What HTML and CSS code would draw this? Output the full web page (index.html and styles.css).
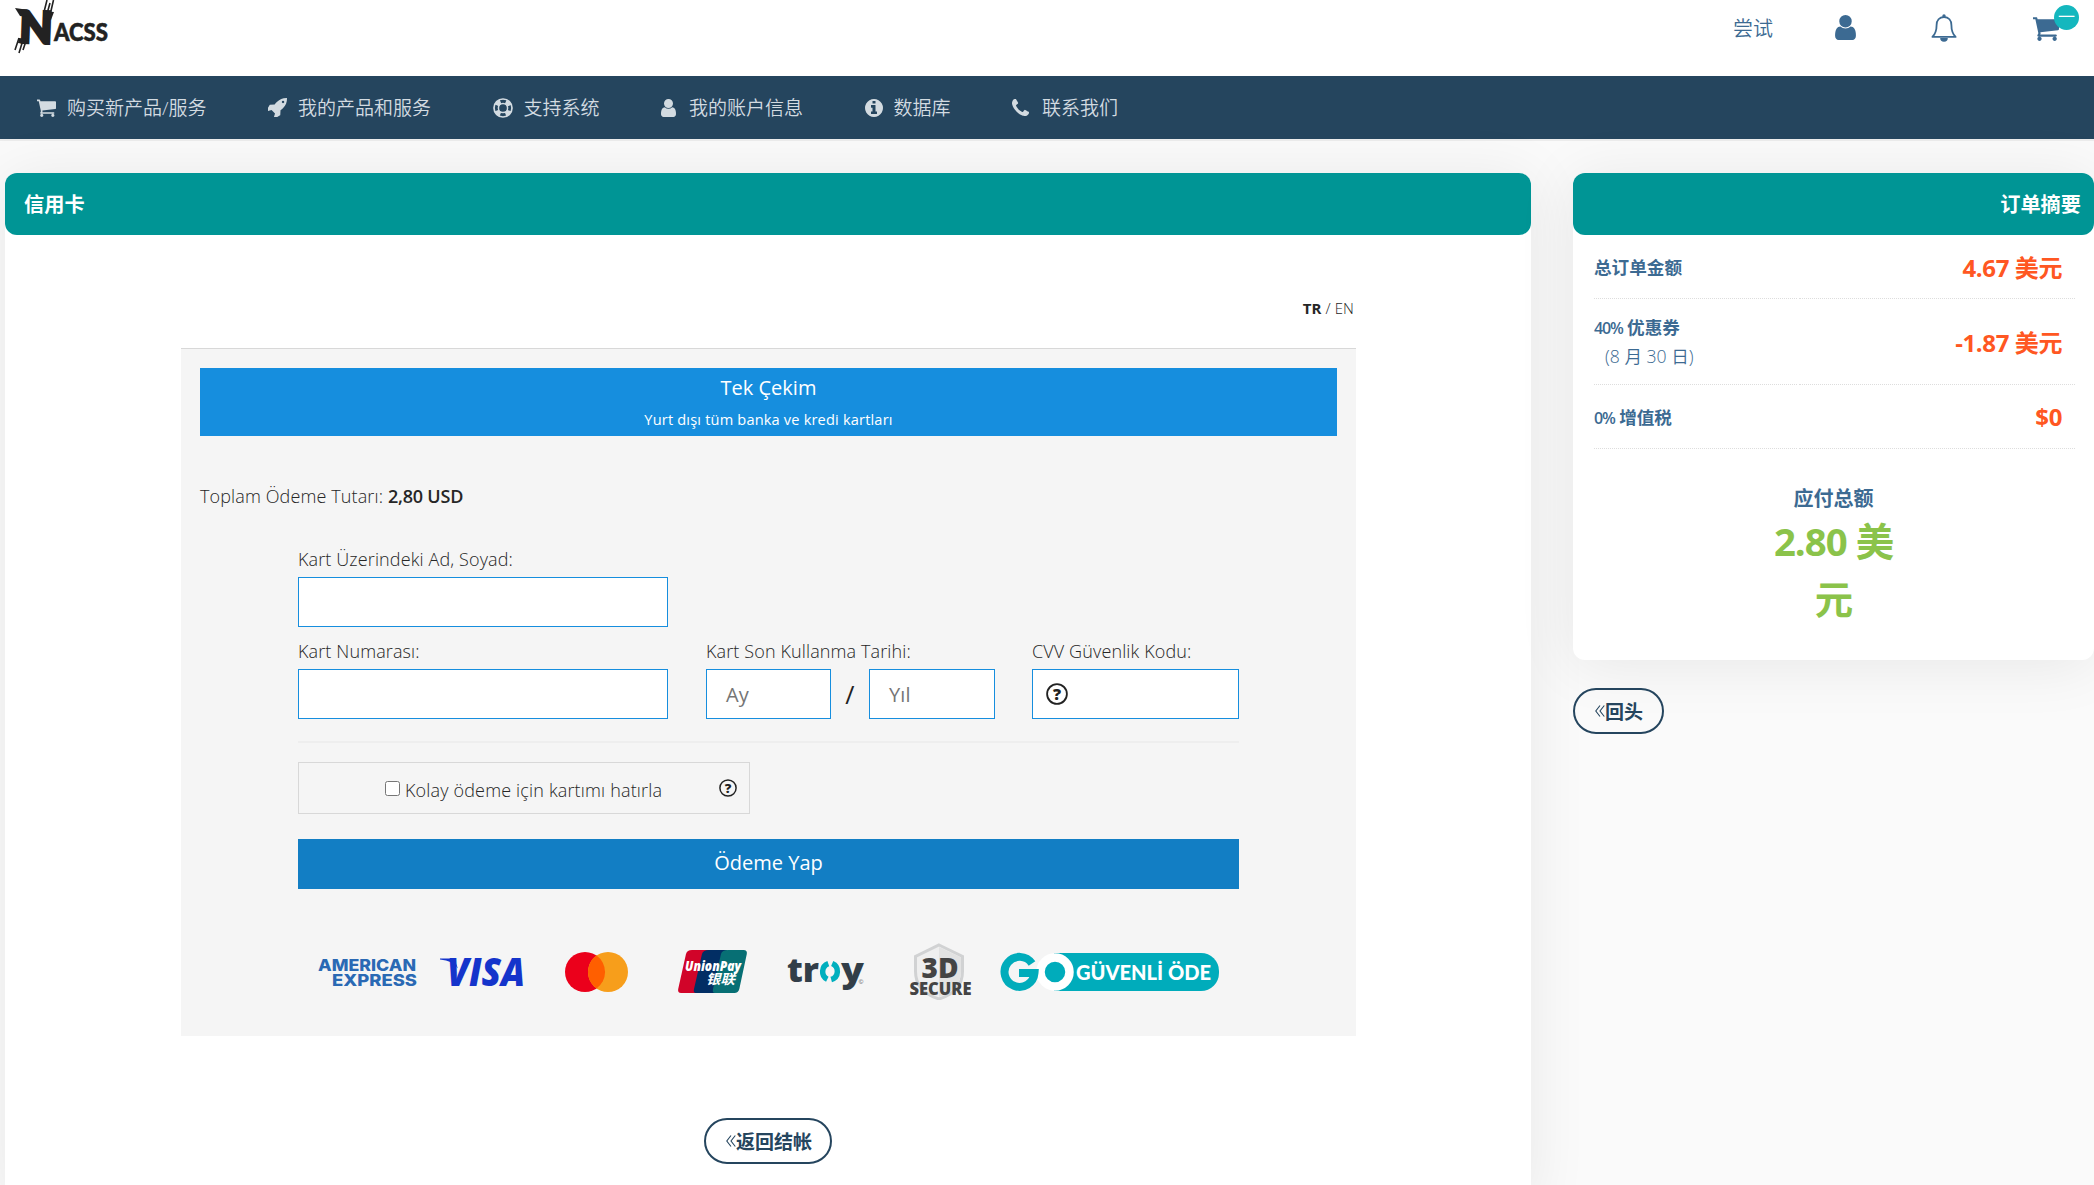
FILE: index.html
```html
<!DOCTYPE html>
<html lang="zh-CN">
<head>
<meta charset="utf-8">
<title>NACSS</title>
<link rel="stylesheet" href="styles.css">
</head>
<body>
<svg class="sprite" width="0" height="0">
  <symbol id="cart" viewBox="128 128 1536 1536"><path d="M640 1536q0 52-38 90t-90 38-90-38-38-90 38-90 90-38 90 38 38 90zm896 0q0 52-38 90t-90 38-90-38-38-90 38-90 90-38 90 38 38 90zm128-1088v512q0 24-16.500 42.500t-40.500 21.500l-1044 122q13 60 13 70 0 16-24 64h920q26 0 45 19t19 45-19 45-45 19h-1024q-26 0-45-19t-19-45q0-11 8-31.500t16-36 21.500-40 15.500-29.500l-177-823h-204q-26 0-45-19t-19-45 19-45 45-19h256q16 0 28.500 6.500t19.500 15.500 13 24.500 8 26 5.500 29.500 4.500 26h1201q26 0 45 19t19 45z"/></symbol>
  <symbol id="user" viewBox="256 128 1280 1536"><path d="M1536 1399q0 109-62.500 187t-150.500 78h-854q-88 0-150.500-78t-62.500-187q0-85 8.500-160.500t31.500-152 58.500-131 94-89 134.500-34.500q131 128 313 128t313-128q76 0 134.500 34.500t94 89 58.500 131 31.500 152 8.500 160.500zm-256-887q0 159-112.500 271.500t-271.500 112.500-271.500-112.500-112.500-271.500 112.500-271.500 271.500-112.500 271.500 112.500 112.500 271.500z"/></symbol>
  <symbol id="rocket" viewBox="128 128 1536 1536"><path d="M1440 448q0-40-28-68t-68-28-68 28-28 68 28 68 68 28 68-28 28-68zm224-288q0 249-75.500 430.500t-253.500 360.500q-81 80-195 176l-20 379q-2 16-16 26l-384 224q-7 4-16 4-12 0-23-9l-64-64q-13-14-8-32l85-276-281-281-276 85q-3 1-9 1-14 0-23-9l-64-64q-17-19-5-39l224-384q10-14 26-16l379-20q96-114 176-195 188-187 358-258t431-71q14 0 24 9.500t10 22.500z"/></symbol>
  <symbol id="info" viewBox="128 128 1536 1536"><path d="M1152 1376v-160q0-14-9-23t-23-9h-96v-512q0-14-9-23t-23-9h-320q-14 0-23 9t-9 23v160q0 14 9 23t23 9h96v320h-96q-14 0-23 9t-9 23v160q0 14 9 23t23 9h448q14 0 23-9t9-23zm-128-896v-160q0-14-9-23t-23-9h-192q-14 0-23 9t-9 23v160q0 14 9 23t23 9h192q14 0 23-9t9-23zm640 416q0 209-103 385.500t-279.500 279.500-385.500 103-385.500-103-279.500-279.500-103-385.500 103-385.500 279.500-279.500 385.500-103 385.500 103 279.500 279.500 103 385.500z"/></symbol>
  <symbol id="phone" viewBox="192 128 1408 1408"><path d="M1600 1240q0 27-10 70.500t-21 68.500q-21 50-122 106-94 51-186 51-27 0-53-3.500t-57.500-12.500-47-14.500-55.500-20.500-49-18q-98-35-175-83-127-79-264-216t-216-264q-48-77-83-175-3-9-18-49t-20.500-55.500-14.500-47-12.500-57.500-3.500-53q0-92 51-186 56-101 106-122 25-11 68.500-21t70.500-10q14 0 21 3 18 6 53 76 11 19 30 54t35 63.500 31 53.500q3 4 17.500 25t21.500 35.500 7 28.500q0 20-28.500 50t-62 55-62 53-28.500 46q0 9 5 22.500t8.500 20.500 14 24 11.500 19q76 137 174 235t235 174q2 1 19 11.500t24 14 20.500 8.500 22.500 5q18 0 46-28.500t53-62 55-62 50-28.500q14 0 28.500 7t35.500 21.500 25 17.500q25 15 53.500 31t63.500 35 54 30q70 35 76 53 3 7 3 21z"/></symbol>
  <symbol id="ring" viewBox="0 0 20 20"><g fill="none" stroke="currentColor"><circle cx="10" cy="10" r="9" stroke-width="1.700"/><circle cx="10" cy="10" r="4.600" stroke-width="1.500"/><circle cx="10" cy="10" r="6.900" stroke-width="4.600" stroke-dasharray="5.400 5.438" stroke-dashoffset="-2.700"/></g></symbol>
  <symbol id="bell" viewBox="0 0 26 28"><path d="M13 3C8.300 3 5.600 6.400 5.600 11c0 6-1.600 9.400-4.200 11.900h23.200C22 20.400 20.400 17 20.400 11 20.400 6.400 17.700 3 13 3z" fill="none" stroke="currentColor" stroke-width="1.800" stroke-linejoin="round"/><circle cx="13" cy="1.900" r="1.700"/><path d="M9.200 24h7.600a3.800 3.800 0 0 1-7.600 0z"/></symbol>
  <symbol id="help" viewBox="0 0 22 22"><circle cx="11" cy="11" r="9.900" fill="none" stroke="#222" stroke-width="1.800"/><text x="11" y="16.800" font-size="16" font-weight="800" text-anchor="middle" fill="#222" font-family="Open Sans, sans-serif">?</text></symbol>
</svg>

<header class="top">
  <svg class="logo" width="120" height="60" viewBox="0 0 120 60">
    <g transform="translate(19 42.500) rotate(2)"><text x="0" y="0" font-size="44" textLength="33" lengthAdjust="spacingAndGlyphs" class="logo-n">N</text></g>
    <path d="M15 8l14 2-3 7-6-1zM43 11l11 1-3 8-8-2zM19 38l9 1-4 5-6-1z" fill="#222"/>
    <g stroke="#222" stroke-width="1.600"><path d="M44 12l3-12M47.500 12l2.500-9M50.500 13l3-13M15 50l4-12M19 53l4-13M23 50l4-12"/></g>
    <text x="54" y="41" font-size="25" textLength="54" lengthAdjust="spacingAndGlyphs" class="logo-text">ACSS</text>
  </svg>
  <div class="account">
    <span class="account-name">尝试</span>
    <svg class="i-user"><use href="#user"/></svg>
    <svg class="i-bell"><use href="#bell"/></svg>
    <span class="basket"><svg class="i-cart"><use href="#cart"/></svg><b class="badge">一</b></span>
  </div>
</header>

<nav class="menu">
  <a><svg width="19" height="19"><use href="#cart"/></svg><span>购买新产品/服务</span></a>
  <a><svg width="19" height="19"><use href="#rocket"/></svg><span>我的产品和服务</span></a>
  <a><svg width="20" height="20"><use href="#ring"/></svg><span>支持系统</span></a>
  <a class="wide"><svg width="15" height="18"><use href="#user"/></svg><span>我的账户信息</span></a>
  <a><svg width="18" height="18"><use href="#info"/></svg><span>数据库</span></a>
  <a class="wide"><svg width="17" height="17"><use href="#phone"/></svg><span>联系我们</span></a>
</nav>

<main class="page">
  <section class="card payment">
    <h2 class="card-title">信用卡</h2>
    <div class="lang"><b>TR</b> / EN</div>
    <form class="form">
      <div class="plan"><div class="plan-name">Tek Çekim</div><div class="plan-note">Yurt dışı tüm banka ve kredi kartları</div></div>
      <p class="amount">Toplam Ödeme Tutarı: <b>2,80 USD</b></p>
      <div class="fields">
        <label class="field name"><span>Kart Üzerindeki Ad, Soyad:</span><i class="box"></i></label>
        <div class="row">
          <label class="field number"><span>Kart Numarası:</span><i class="box"></i></label>
          <div class="field expiry"><span>Kart Son Kullanma Tarihi:</span><div class="dates"><i class="box">Ay</i><em>/</em><i class="box">Yıl</i></div></div>
          <label class="field cvv"><span>CVV Güvenlik Kodu:</span><i class="box"><svg width="22" height="22"><use href="#help"/></svg></i></label>
        </div>
        <div class="remember"><input type="checkbox"><span>Kolay ödeme için kartımı hatırla</span><svg width="18" height="18"><use href="#help"/></svg></div>
        <div class="pay">Ödeme Yap</div>
      </div>
      <div class="logos">
        <svg width="941" height="60" viewBox="298 940 941 60">
          <g class="amex"><text x="318" y="970.500" textLength="98" lengthAdjust="spacingAndGlyphs">AMERICAN</text><text x="332" y="985.500" textLength="85" lengthAdjust="spacingAndGlyphs">EXPRESS</text></g>
          <text class="visa" x="447" y="985.500" textLength="78" lengthAdjust="spacingAndGlyphs">VISA</text><path d="M440 958.500h14l4 10q-5-8-18-9z" fill="#1434cb"/>
          <circle cx="585" cy="972" r="20" fill="#eb001b"/><circle cx="608" cy="972" r="20" fill="#f79e1b"/><path d="M596.500 955.600a20 20 0 0 1 0 32.800a20 20 0 0 1 0-32.800z" fill="#ff5f00"/>
          <path d="M692 950h21l-9 43h-23q-3.500 0-2.800-4l7.800-35q1-4 6-4z" fill="#d10429"/><path d="M709 950h18l-9 43h-22q-3 0-2-4l8-35q1-4 7-4z" fill="#022e64"/><path d="M728 950h15.500q4 0 3.300 4l-7.500 35q-1 4-5 4H715q-3 0-2-4l8-35q1-4 7-4z" fill="#076f74"/>
          <text class="union" x="685" y="971" textLength="56" lengthAdjust="spacingAndGlyphs">UnionPay</text><text class="union-cn" x="706" y="983.500" textLength="29" lengthAdjust="spacingAndGlyphs">银联</text>
          <g class="troy"><text x="787" y="981.500" textLength="32" lengthAdjust="spacingAndGlyphs">tr</text><text x="841" y="981.500" textLength="23" lengthAdjust="spacingAndGlyphs">y</text></g>
          <g fill="none" stroke="#00afbe" stroke-width="5.500"><path d="M828.300 963.700a8.500 8.500 0 0 0-1 15.600M832.200 963.500a8.500 8.500 0 0 1-1 16"/></g><text x="858.500" y="984" font-size="6" fill="#555" font-family="Open Sans, sans-serif">©</text>
          <path d="M939 945l23.500 11.500v15q0 20-23.500 27.500q-23.500-7.500-23.500-27.500v-15z" fill="#efefef" stroke="#d1d2d3" stroke-width="3"/><path d="M939 947l22 10.500v14q0 18-22 25.500z" fill="#e2e2e2"/>
          <g class="secure"><text x="921.500" y="977.500" font-size="29" textLength="37" lengthAdjust="spacingAndGlyphs">3D</text><text x="909.500" y="994.500" font-size="17" textLength="62" lengthAdjust="spacingAndGlyphs">SECURE</text></g>
          <path d="M1054 953h147a18 18 0 0 1 18 18v2a18 18 0 0 1-18 18h-147z" fill="#00acbb"/><circle cx="1055" cy="972" r="14.500" fill="#00acbb" stroke="#fff" stroke-width="8.500"/>
          <path d="M1032 963.500A15 15 0 1 0 1034.500 973H1019" fill="none" stroke="#00acbb" stroke-width="8"/>
          <text class="guvenli" x="1076" y="979.500" textLength="135" lengthAdjust="spacingAndGlyphs">GÜVENLİ ÖDE</text>
        </svg>
      </div>
    </form>
    <a class="pill return"><svg width="10" height="12" viewBox="0 0 10 12"><path d="M5 .500L.800 6 5 11.500M9.300.500L5 6l4.300 5.500"/></svg>返回结帐</a>
  </section>

  <aside class="side">
    <section class="card summary">
      <h2 class="card-title">订单摘要</h2>
      <dl class="lines">
        <div class="line first"><dt>总订单金额</dt><dd>4.67 美元</dd></div>
        <div class="line second"><dt><span><b>40%</b> 优惠券</span><small>(8 月 30 日)</small></dt><dd>-1.87 美元</dd></div>
        <div class="line third"><dt><span><b>0%</b> 增值税</span></dt><dd>$0</dd></div>
      </dl>
      <div class="total"><div class="total-label">应付总额</div><div class="total-value">2.80 美元</div></div>
    </section>
    <a class="pill back"><svg width="10" height="12" viewBox="0 0 10 12"><path d="M5 .500L.800 6 5 11.500M9.300.500L5 6l4.300 5.500"/></svg>回头</a>
  </aside>
</main>
</body>
</html>
```
FILE: styles.css
```css
* { box-sizing: border-box; }
html, body { height: 1185px; overflow: hidden; }
body { margin: 0; background: #fafafa; font-family: "Open Sans", "Noto Sans CJK SC", sans-serif; color: #262626; }
.sprite { position: absolute; }
svg { fill: currentColor; flex: none; display: block; }
i, em { font-style: normal; }

.top { height: 76px; background: #fff; display: flex; justify-content: space-between; }
.logo { overflow: visible; }
.logo-n, .logo-text { fill: #222; font-family: Lato, sans-serif; font-weight: 900; }
.logo-n { stroke: #222; stroke-width: 3px; }
.logo-text { stroke: #222; stroke-width: .6px; }
.account { display: flex; align-items: flex-start; color: #3c6a92; padding: 14px 35px 0 0; }
.account-name { font-size: 20px; font-weight: 350; line-height: 30px; width: 102px; }
.i-user { width: 21px; height: 25px; margin: 1px 75px 0 0; }
.i-bell { width: 26px; height: 28px; margin-right: 76px; }
.i-cart { width: 26px; height: 26px; margin-top: 1px; }
.basket { position: relative; }
.badge { position: absolute; left: 21px; top: -9px; width: 25px; height: 25px; border-radius: 50%; background: #14b7be; color: #fff; font-size: 17px; line-height: 24px; font-weight: 350; text-align: center; }

.menu { height: 63px; background: #25455e; display: flex; align-items: center; gap: 61.500px; padding: 0 37px; box-shadow: 0 2px 0 #ececec; }
.menu a { display: flex; align-items: center; gap: 11px; font-size: 19px; font-weight: 350; color: #d3dbe1; white-space: nowrap; }
.menu a span { padding-bottom: 2px; }
.menu .wide { gap: 13px; }

.page { display: flex; align-items: flex-start; gap: 42px; padding: 34px 0 0 5px; }
.card { background: #fff; border-radius: 12px; box-shadow: 0 5px 60px rgba(0, 0, 0, .08); }
.card-title { margin: 0; height: 62px; padding: 0 13px 0 19px; line-height: 62px; border-radius: 12px; background: #009595; color: #fff; font-size: 20.200px; font-weight: 700; }
.payment { width: 1526px; height: 1030px; }
.lang { margin: 60px 177px 0 0; height: 53px; line-height: 26px; text-align: right; font-size: 15px; font-weight: 350; letter-spacing: .1px; }
.lang b { font-weight: 700; }
.amount b { font-weight: 600; letter-spacing: -.2px; }

.form { width: 1175px; height: 688px; margin-left: 176px; background: #f5f5f5; border-top: 1px solid #d8d8d8; padding: 19px 19px 0; }
.plan { height: 68px; background: #168ede; color: #fff; text-align: center; }
.plan-name { font-size: 20px; line-height: 40px; }
.plan-note { font-size: 14.600px; line-height: 22px; font-weight: 500; letter-spacing: .17px; }
.amount { margin: 47px 0 0; font-size: 18px; line-height: 26px; font-weight: 350; letter-spacing: .12px; }
.fields { margin: 37px 98px 0; width: 941px; font-size: 18px; font-weight: 350; letter-spacing: .12px; }
.field { display: block; }
.field > span { display: block; height: 31px; line-height: 26px; white-space: nowrap; }
.box { display: flex; align-items: center; height: 50px; background: #fff; border: 1px solid #168ede; padding-left: 19px; color: #757575; font-size: 20px; font-weight: 450; flex: 1; }
.name, .number { width: 370px; }
.row { display: flex; margin-top: 11px; padding-bottom: 22px; border-bottom: 2px solid #eee; }
.expiry { width: 289px; margin: 0 37px 0 38px; }
.dates { display: flex; align-items: center; }
.dates .box { flex: none; width: 125px; }
.dates .box:last-child { width: 126px; }
.dates em { width: 38px; text-align: center; font-size: 25px; color: #222; font-weight: 400; }
.cvv { flex: 1; }
.cvv .box { padding-left: 13px; }
.remember { width: 452px; height: 52px; margin-top: 19px; border: 1px solid #d8d8d8; display: flex; align-items: center; padding-left: 86px; }
.remember input { width: 15px; height: 15px; margin: 0 5px 0 0; }
.remember span { line-height: 26px; padding-top: 3px; width: 314px; white-space: nowrap; letter-spacing: .16px; }
.pay { height: 50px; margin-top: 25px; background: #127ec4; color: #fff; text-align: center; font-size: 20px; font-weight: 400; line-height: 47px; letter-spacing: 0; }
.logos { margin: 51px 98px 0; }
.amex { font: 800 16.500px Inter, sans-serif; fill: #2a69b4; }
.visa { font: italic 800 38px "Open Sans", sans-serif; fill: #1434cb; }
.union { font: italic 800 14px "Open Sans", sans-serif; fill: #fff; }
.union-cn { font: italic 700 13.500px "Noto Sans CJK SC", sans-serif; fill: #fff; }
.troy { font: 800 34px "Open Sans", sans-serif; fill: #323e48; }
.secure { font-family: "Open Sans", sans-serif; font-weight: 800; fill: #444; }
.guvenli { font: 900 20.500px Lato, sans-serif; fill: #fff; }

.pill { display: flex; align-items: center; height: 46px; border: 2px solid #25455e; border-radius: 23px; padding: 0 0 1px 20px; color: #25455e; font-size: 19px; font-weight: 700; white-space: nowrap; }
.pill svg { fill: none; stroke: currentColor; stroke-width: 1.100px; }
.return { width: 128px; margin: 82px auto 0 699px; }
.back { width: 91px; margin-top: 28px; }

.side { width: 521px; }
.summary { height: 487px; }
.summary .card-title { text-align: right; }
.lines { margin: 0 19px 0 21px; }
.line { display: flex; align-items: center; color: #3c6a92; }
.line dt, .line dd { height: 100%; margin: 0; border-bottom: 1px dotted #ddd; display: flex; flex-direction: column; justify-content: center; }
.line dt { width: 203px; margin-right: 2px; font-size: 17.600px; font-weight: 700; }
.line dt b { font-size: 16px; font-weight: 650; letter-spacing: -1.200px; }
.line dd { flex: 1; align-items: flex-end; padding-right: 13px; color: #ff5722; font-size: 24px; font-weight: 700; letter-spacing: -.4px; }
.first { height: 64px; }
.second { height: 86px; }
.second dt { padding-top: 4px; }
.third { height: 64px; }
.line small { font-size: 17.600px; font-weight: 350; padding-left: 11px; line-height: 34px; }
.total { width: 146px; margin: 35px auto 0; text-align: center; }
.total-label { color: #3c6a92; font-size: 20px; font-weight: 700; line-height: 30px; }
.total-value { color: #8bc34a; font-size: 38.400px; line-height: 57.600px; font-weight: 700; letter-spacing: -1px; margin-top: -1px; }
```
